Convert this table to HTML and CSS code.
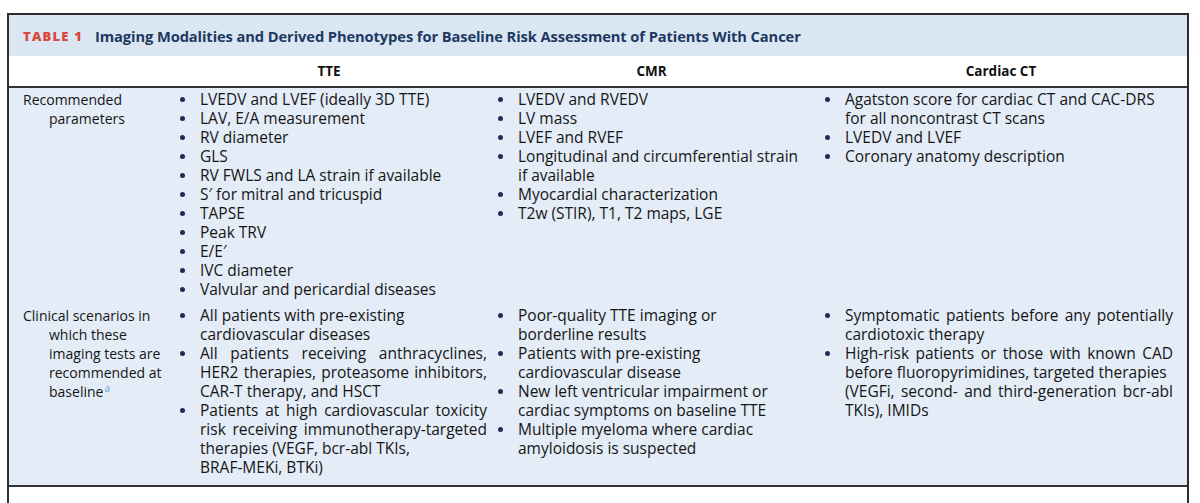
FILE: index.html
```html
<!DOCTYPE html>
<html lang="en">
<head>
<meta charset="utf-8">
<title>Table 1</title>
<link rel="stylesheet" href="styles.css">
</head>
<body>
<div class="table">
  <div class="caption"><span class="label">TABLE 1</span><span class="title">Imaging Modalities and Derived Phenotypes for Baseline Risk Assessment of Patients With Cancer</span></div>
  <div class="grid">
    <div class="hd"></div>
    <div class="hd">TTE</div>
    <div class="hd">CMR</div>
    <div class="hd">Cardiac CT</div>

    <div class="cell c1 r1">Recommended parameters</div>
    <div class="cell c2 r1">
      <ul>
        <li>LVEDV and LVEF (ideally 3D TTE)</li>
        <li>LAV, E/A measurement</li>
        <li>RV diameter</li>
        <li>GLS</li>
        <li>RV FWLS and LA strain if available</li>
        <li>S′ for mitral and tricuspid</li>
        <li>TAPSE</li>
        <li>Peak TRV</li>
        <li>E/E′</li>
        <li>IVC diameter</li>
        <li>Valvular and pericardial diseases</li>
      </ul>
    </div>
    <div class="cell c3 r1">
      <ul>
        <li>LVEDV and RVEDV</li>
        <li>LV mass</li>
        <li>LVEF and RVEF</li>
        <li>Longitudinal and circumferential strain if available</li>
        <li>Myocardial characterization</li>
        <li>T2w (STIR), T1, T2 maps, LGE</li>
      </ul>
    </div>
    <div class="cell c4 r1">
      <ul>
        <li>Agatston score for cardiac CT and CAC-DRS for all noncontrast CT scans</li>
        <li>LVEDV and LVEF</li>
        <li>Coronary anatomy description</li>
      </ul>
    </div>

    <div class="cell c1 r2">Clinical scenarios in which these imaging tests are recommended at baseline<sup class="fn">a</sup></div>
    <div class="cell c2 r2 just">
      <ul>
        <li>All patients with pre-existing<br>cardiovascular diseases</li>
        <li>All patients receiving anthracyclines, HER2 therapies, proteasome inhibitors, CAR-T therapy, and HSCT</li>
        <li>Patients at high cardiovascular toxicity risk receiving immunotherapy-targeted therapies (VEGF, bcr-abl TKIs,<br>BRAF-MEKi, BTKi)</li>
      </ul>
    </div>
    <div class="cell c3 r2">
      <ul>
        <li>Poor-quality TTE imaging or<br>borderline results</li>
        <li>Patients with pre-existing<br>cardiovascular disease</li>
        <li>New left ventricular impairment or cardiac symptoms on baseline TTE</li>
        <li>Multiple myeloma where cardiac amyloidosis is suspected</li>
      </ul>
    </div>
    <div class="cell c4 r2 just">
      <ul>
        <li>Symptomatic patients before any potentially cardiotoxic therapy</li>
        <li>High-risk patients or those with known CAD before fluoropyrimidines, targeted therapies<br>(VEGFi, second- and third-generation bcr-abl TKIs), IMIDs</li>
      </ul>
    </div>
  </div>
  <div class="foot"></div>
</div>
</body>
</html>
```

FILE: styles.css
```css
html, body {
  margin: 0;
  padding: 0;
  background: #ffffff;
}

body {
  padding: 13px 0 0 7px;
  font-family: "Open Sans", "Noto Sans", sans-serif;
  color: #151515;
}

.table {
  width: 1182px;
  border: 2px solid #2d2d2d;
  border-bottom: none;
  box-sizing: border-box;
}

.caption {
  height: 41px;
  background: #dbe6f3;
  display: flex;
  align-items: center;
  padding-left: 14px;
  gap: 12px;
}

.label {
  color: #d9473d;
  font-weight: 800;
  font-size: 13px;
  letter-spacing: 1.2px;
}

.title {
  color: #1b3961;
  font-weight: 700;
  font-size: 14.7px;
  letter-spacing: -0.1px;
}

.grid {
  display: grid;
  grid-template-columns: 161px 318px 327px 372px;
}

.hd {
  height: 30px;
  background: #ffffff;
  border-bottom: 2px solid #333333;
  display: flex;
  align-items: center;
  justify-content: center;
  font-weight: 700;
  font-size: 13.5px;
  color: #111111;
}

.cell {
  background: #e3ecf7;
  font-size: 15.5px;
  line-height: 19px;
  font-weight: 500;
}

.r1 {
  padding-top: 2px;
  padding-bottom: 5px;
}

.r2 {
  padding-top: 2px;
  padding-bottom: 8px;
  border-bottom: 2px solid #333333;
}

.c1 {
  font-size: 14px;
  padding-left: 40px;
  padding-right: 4px;
  text-indent: -26px;
}

.c2 {
  padding-right: 1px;
}

.c3 {
  padding-right: 15px;
}

.c4 {
  padding-right: 14px;
}

.just {
  text-align: justify;
}

ul {
  list-style: none;
  margin: 0;
  padding: 0 0 0 30px;
}

li {
  position: relative;
}

li::before {
  content: "";
  position: absolute;
  left: -20px;
  top: 7px;
  width: 5px;
  height: 5px;
  border-radius: 50%;
  background: #1c2d52;
}

.fn {
  font-size: 10px;
  color: #5aa2da;
  line-height: 0;
  vertical-align: 5px;
  margin-left: 1px;
}

.foot {
  height: 40px;
  background: #ffffff;
}
```
